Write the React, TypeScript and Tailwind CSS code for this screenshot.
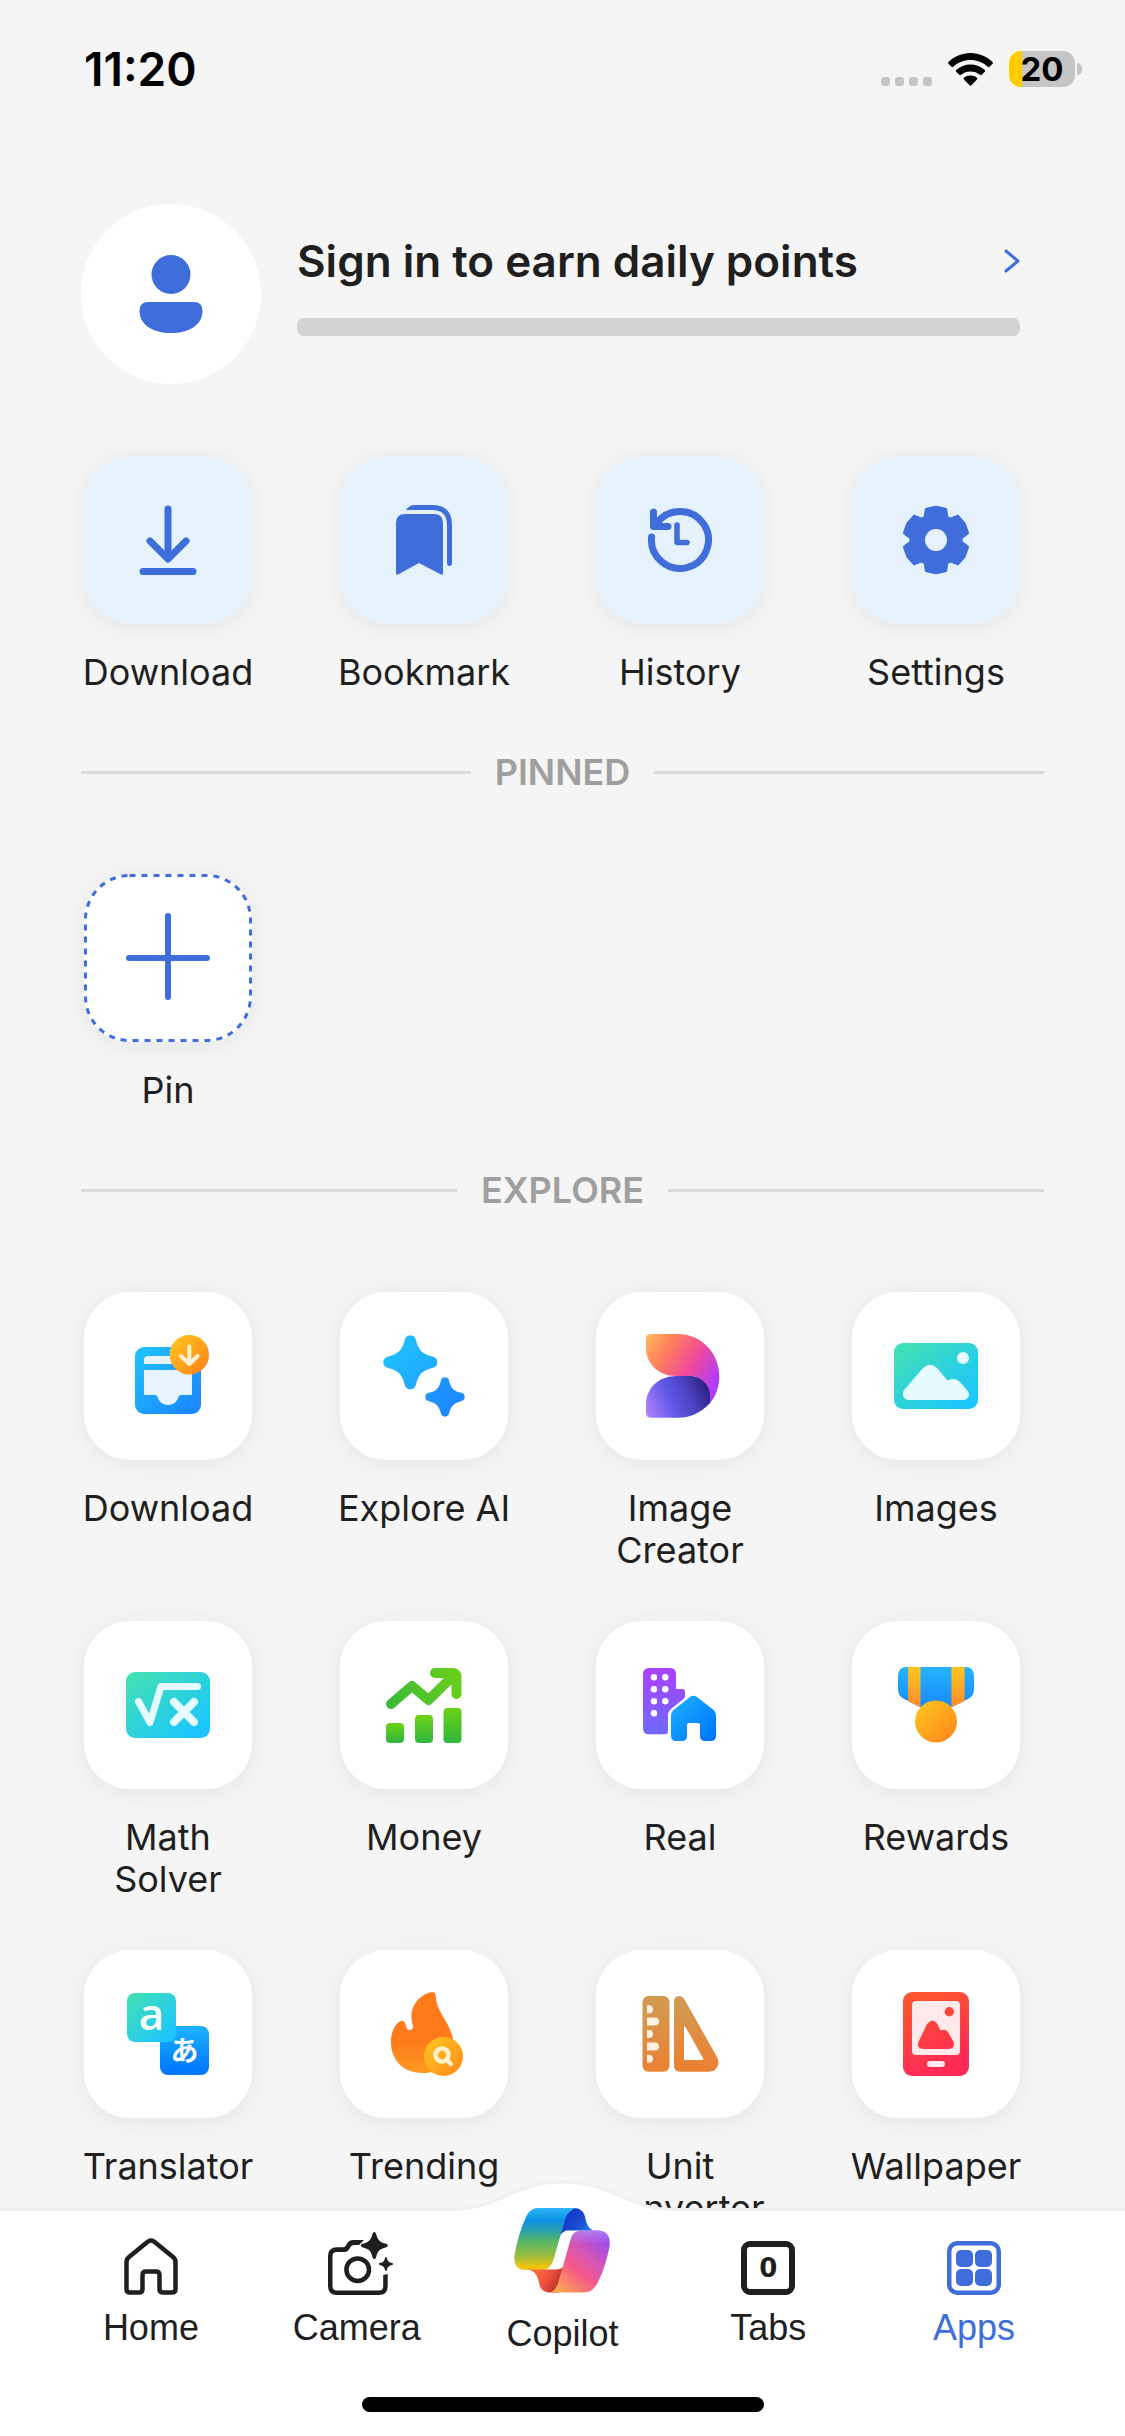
import type { ReactNode } from 'react'
import clsx from 'clsx'

type AppItem = {
  label: string
  icon: ReactNode
}

type GradientProps = {
  id: string
  from: string
  to: string
  vertical?: boolean
}

const Gradient = ({ id, from, to, vertical }: GradientProps) => (
  <linearGradient id={id} x1="0" y1="0" x2={vertical ? '0' : '1'} y2="1">
    <stop offset="0.1" stopColor={from} />
    <stop offset="0.9" stopColor={to} />
  </linearGradient>
)

// every tile icon is drawn on the same 168 unit square
const TileIcon = ({ children }: { children: ReactNode }) => (
  <svg viewBox="0 0 168 168" className="h-full w-full" fill="none" aria-hidden="true">
    {children}
  </svg>
)

const gearPoints = [0, 60, 120, 180, 240, 300]
  .flatMap((angle) =>
    [
      [25, -25],
      [32, -17],
      [32.5, 0],
      [32, 17],
      [25, 25],
    ].map(([r, offset]) => {
      const a = ((angle + offset - 90) * Math.PI) / 180
      return `${(84 + r * Math.cos(a)).toFixed(1)},${(84 + r * Math.sin(a)).toFixed(1)}`
    }),
  )
  .join(' ')

const softStar =
  'M-6-21Q-5-27 0-27Q5-27 6-21C8.500-12 12-8.500 21-6Q27-5 27 0Q27 5 21 6C12 8.500 8.500 12 6 21Q5 27 0 27Q-5 27-6 21C-8.500 12-12 8.500-21 6Q-27 5-27 0Q-27-5-21-6C-12-8.500-8.500-12-6-21Z'
const sharpStar =
  'M0-13.500Q1.300-13.500 1.700-12C3.500-5 5-3.500 12-1.700Q13.500-1.300 13.500 0Q13.500 1.300 12 1.700C5 3.500 3.500 5 1.700 12Q1.300 13.500 0 13.500Q-1.300 13.500-1.700 12C-3.500 5-5 3.500-12 1.700Q-13.500 1.300-13.500 0Q-13.500-1.300-12-1.700C-5-3.500-3.500-5-1.700-12Q-1.300-13.500 0-13.500Z'

const quickActions: AppItem[] = [
  {
    label: 'Download',
    icon: (
      <TileIcon>
        <path
          d="M84 53V102M66 85L84 103L102 85M59 115.500H109"
          stroke="#3f6edb"
          strokeWidth="7"
          strokeLinecap="round"
          strokeLinejoin="round"
        />
      </TileIcon>
    ),
  },
  {
    label: 'Bookmark',
    icon: (
      <TileIcon>
        <path
          d="M65 58H94Q103 58 103 67V117Q103 120 100 118L79 107L59 118Q56 120 56 117V67Q56 58 65 58Z"
          fill="#3f6edb"
        />
        <path
          d="M66 54Q69 49 75 49H92Q112 49 112 69V107Q112 110 109.500 110Q107 110 107 107V69Q107 54 92 54Z"
          fill="#3f6edb"
        />
      </TileIcon>
    ),
  },
  {
    label: 'History',
    icon: (
      <TileIcon>
        <path
          d="M55.600 81A28.500 28.500 0 1 0 61 67M57.500 56V70.500H72"
          stroke="#3f6edb"
          strokeWidth="7"
          strokeLinecap="round"
          strokeLinejoin="round"
        />
        <path
          d="M81 69V86.500H91"
          stroke="#3f6edb"
          strokeWidth="5.500"
          strokeLinecap="round"
          strokeLinejoin="round"
        />
      </TileIcon>
    ),
  },
  {
    label: 'Settings',
    icon: (
      <TileIcon>
        <polygon
          points={gearPoints}
          fill="#3f6edb"
          stroke="#3f6edb"
          strokeWidth="3.500"
          strokeLinejoin="round"
        />
        <circle cx="84" cy="84" r="11" fill="#e5f2fc" />
      </TileIcon>
    ),
  },
]

const exploreApps: AppItem[] = [
  {
    label: 'Download',
    icon: (
      <TileIcon>
        <defs>
          <Gradient id="dl-box" from="#20beff" to="#1b88ff" />
          <Gradient id="dl-badge" from="#ffc220" to="#ff8619" />
        </defs>
        <rect x="51" y="55" width="66" height="67" rx="9" fill="url(#dl-box)" />
        <path d="M64 64H108V72H60V68Q60 64 64 64Z" fill="#e6f4ff" />
        <path
          d="M61 78H107Q108 78 108 79V102Q108 103 107 103H97Q95 103 94.500 105C93 110 89 113 84 113S75 110 73.500 105Q73 103 71 103H61Q60 103 60 102V79Q60 78 61 78Z"
          fill="#e6f4ff"
        />
        <circle cx="105.300" cy="62.700" r="19.700" fill="url(#dl-badge)" />
        <path
          d="M105.300 54.500V72M97 64L105.300 72L113.600 64"
          stroke="#fff3d6"
          strokeWidth="4"
          strokeLinecap="round"
          strokeLinejoin="round"
        />
      </TileIcon>
    ),
  },
  {
    label: 'Explore AI',
    icon: (
      <TileIcon>
        <defs>
          <linearGradient id="spark-lg" gradientUnits="userSpaceOnUse" x1="-27" y1="-27" x2="27" y2="27">
            <stop stopColor="#1fc6ff" />
            <stop offset="1" stopColor="#1fa2ff" />
          </linearGradient>
          <linearGradient id="spark-sm" gradientUnits="userSpaceOnUse" x1="-27" y1="-27" x2="27" y2="27">
            <stop stopColor="#1e9cff" />
            <stop offset="1" stopColor="#1b82ff" />
          </linearGradient>
        </defs>
        <path d={softStar} transform="translate(70.300 70.300)" fill="url(#spark-lg)" />
        <path d={softStar} transform="translate(105 105) scale(.73)" fill="url(#spark-sm)" />
      </TileIcon>
    ),
  },
  {
    label: 'Image Creator',
    icon: (
      <TileIcon>
        <defs>
          <linearGradient id="ic-top" gradientUnits="userSpaceOnUse" x1="50" y1="50" x2="122" y2="94">
            <stop stopColor="#ffb15e" />
            <stop offset="0.25" stopColor="#ff7f5c" />
            <stop offset="0.6" stopColor="#f04a9a" />
            <stop offset="0.95" stopColor="#b03df5" />
          </linearGradient>
          <linearGradient id="ic-bottom" gradientUnits="userSpaceOnUse" x1="50" y1="122" x2="113" y2="94">
            <stop stopColor="#b184ff" />
            <stop offset="0.4" stopColor="#5f58e8" />
            <stop offset="0.7" stopColor="#4a41bd" />
            <stop offset="1" stopColor="#2a1d78" />
          </linearGradient>
        </defs>
        <path
          d="M50 47Q50 42 55 42H82C105 42 123.300 61 123.300 84C123.300 95 120 105 113 112V103C113 92 104 84 94 84H80C62 84 50 71 50 56Z"
          fill="url(#ic-top)"
        />
        <path
          d="M50 121V112C50 96 63 84 80 84H94C105 84 114 93 114 104V111C106 120 95 125.700 82 125.700H55Q50 125.700 50 121Z"
          fill="url(#ic-bottom)"
        />
      </TileIcon>
    ),
  },
  {
    label: 'Images',
    icon: (
      <TileIcon>
        <defs>
          <Gradient id="img-bg" from="#3fdfb8" to="#1cc5ff" />
        </defs>
        <rect x="42" y="51" width="84" height="66" rx="9" fill="url(#img-bg)" />
        <circle cx="111" cy="66" r="6" fill="#e6fbff" />
        <path
          d="M57 108C51 108 49 101 53 97L71 76Q78 69.500 85 76L95.700 88.500Q103 85 108 90L115 98C119 102 117 108 111 108Z"
          fill="#e6fbff"
        />
      </TileIcon>
    ),
  },
  {
    label: 'Math Solver',
    icon: (
      <TileIcon>
        <defs>
          <Gradient id="math-bg" from="#3fdfb8" to="#1cc5ff" />
        </defs>
        <rect x="42" y="51" width="84" height="66" rx="9" fill="url(#math-bg)" />
        <path
          d="M54.500 80.500L66 101.500L77 65.500H113.500"
          stroke="#e6fbff"
          strokeWidth="7"
          strokeLinecap="round"
          strokeLinejoin="round"
        />
        <path d="M90 81L110 101M110 81L90 101" stroke="#e6fbff" strokeWidth="8" strokeLinecap="round" />
      </TileIcon>
    ),
  },
  {
    label: 'Money',
    icon: (
      <TileIcon>
        <defs>
          <Gradient id="money-bar" from="#66cf1a" to="#36b83c" vertical />
          <linearGradient id="money-line" gradientUnits="userSpaceOnUse" x1="48" y1="84" x2="120" y2="50">
            <stop stopColor="#3cba3a" />
            <stop offset="1" stopColor="#6ad01a" />
          </linearGradient>
        </defs>
        <path
          d="M51 83L72 65L88.500 79L114 54M95 52H113Q116.500 52 116.500 56V73"
          stroke="url(#money-line)"
          strokeWidth="10"
          strokeLinecap="round"
          strokeLinejoin="round"
        />
        <rect x="46" y="102" width="18" height="20" rx="4" fill="url(#money-bar)" />
        <rect x="75" y="94" width="18" height="28" rx="4" fill="url(#money-bar)" />
        <rect x="103.500" y="87" width="18" height="35" rx="4" fill="url(#money-bar)" />
      </TileIcon>
    ),
  },
  {
    label: 'Real',
    icon: (
      <TileIcon>
        <defs>
          <Gradient id="tower" from="#a645ff" to="#7366ff" vertical />
          <Gradient id="house" from="#19aeff" to="#0078ff" />
        </defs>
        <path
          d="M53 47H74Q80 47 80 53V68H86Q89 68 89 71V75Q89 77 87 78.500L75 88Q72 90.500 72 94V110Q72 113.300 69 113.300H53Q47 113.300 47 107.300V53Q47 47 53 47Z"
          fill="url(#tower)"
        />
        {[56.3, 68.3, 80.3, 92.3].map((cy) => (
          <circle key={cy} cx="58" cy={cy} r="3.200" fill="#fff" />
        ))}
        {[56.3, 68.3, 80.3].map((cy) => (
          <circle key={cy} cx="69.300" cy={cy} r="3.200" fill="#fff" />
        ))}
        <path
          d="M75 95Q75 91 78 88.500L94 76Q97.500 73.500 101 76L117 88.500Q120 91 120 95V115Q120 120 115 120H109Q104 120 104 115V104Q104 102 102 102H93Q91 102 91 104V115Q91 120 86 120H80Q75 120 75 115Z"
          fill="url(#house)"
        />
      </TileIcon>
    ),
  },
  {
    label: 'Rewards',
    icon: (
      <TileIcon>
        <defs>
          <Gradient id="ribbon" from="#23b0ff" to="#1c8cff" vertical />
          <Gradient id="stripe" from="#ffc31f" to="#ff8e2a" vertical />
          <Gradient id="medal" from="#ffc31f" to="#ff8a1a" />
        </defs>
        <path
          d="M55 46H113Q122 46 122 55V68Q122 75 116 78L100 86H68L52 78Q46 75 46 68V55Q46 46 55 46Z"
          fill="url(#ribbon)"
        />
        <path d="M56 46H68.500V86.300L56 80ZM99.500 46H112.500V80L99.500 86.300Z" fill="url(#stripe)" />
        <circle cx="84" cy="100.500" r="21" fill="url(#medal)" />
      </TileIcon>
    ),
  },
  {
    label: 'Translator',
    icon: (
      <TileIcon>
        <defs>
          <Gradient id="tr-a" from="#3fdfb8" to="#1cc5ff" />
          <Gradient id="tr-b" from="#1aadff" to="#0079ff" vertical />
        </defs>
        <rect x="76" y="76" width="49" height="49" rx="8" fill="url(#tr-b)" />
        <rect x="43" y="43" width="49" height="49" rx="8" fill="url(#tr-a)" />
        <text
          x="67.500"
          y="80"
          textAnchor="middle"
          className="fill-white font-['Open_Sans',sans-serif] text-[44px] font-semibold"
        >
          a
        </text>
        <text
          x="100.500"
          y="110.500"
          textAnchor="middle"
          className="fill-white font-['Noto_Sans_CJK_JP',sans-serif] text-[28px] font-bold"
        >
          あ
        </text>
      </TileIcon>
    ),
  },
  {
    label: 'Trending',
    icon: (
      <TileIcon>
        <defs>
          <linearGradient id="flame" x1="0" y1="0" x2="0" y2="1">
            <stop offset="0.6" stopColor="#ff7a1a" />
            <stop offset="1" stopColor="#ff9a1f" />
          </linearGradient>
          <Gradient id="trend-badge" from="#ffc220" to="#ff9019" />
        </defs>
        <path
          d="M92 42Q95.500 42 95.700 46C96 64 114 74 114 98C114 114 100 123 83 123C64 123 51 111 51 92C51 83 54 75 60 71.300Q63 69.500 65 73C67 77 66 80 69.500 80Q73 80 73 76C67 57 80 44 92 42Z"
          fill="url(#flame)"
        />
        <circle cx="103.500" cy="106.500" r="19.500" fill="url(#trend-badge)" />
        <circle cx="102" cy="105" r="6.500" stroke="#fff1cf" strokeWidth="4.500" />
        <path d="M106.500 109.500L110.800 113.800" stroke="#fff1cf" strokeWidth="4.500" strokeLinecap="round" />
      </TileIcon>
    ),
  },
  {
    label: 'Unit Converter',
    icon: (
      <TileIcon>
        <defs>
          <Gradient id="ruler" from="#d39a4f" to="#ea8236" vertical />
        </defs>
        <rect x="46.500" y="46" width="27" height="75.700" rx="6" fill="url(#ruler)" />
        {[59.3, 84, 108.8].map((y) => (
          <path key={y} d={`M51 ${y - 4}H53a4 4 0 0 1 0 8H51Z`} fill="#fff0e2" />
        ))}
        {[71.6, 96.4].map((y) => (
          <path key={y} d={`M51 ${y - 4}H59a4 4 0 0 1 0 8H51Z`} fill="#fff0e2" />
        ))}
        <path
          fillRule="evenodd"
          d="M78 52Q78 46 83 46Q86.500 46 88.500 49.500L121 107C125 114 120 121.700 113 121.700H84Q78 121.700 78 116ZM88 77V110H106Q108 110 107 108L89.500 77Q88.500 75.500 88 77Z"
          fill="url(#ruler)"
        />
      </TileIcon>
    ),
  },
  {
    label: 'Wallpaper',
    icon: (
      <TileIcon>
        <defs>
          <linearGradient id="wall" gradientUnits="userSpaceOnUse" x1="58" y1="42" x2="92" y2="118">
            <stop stopColor="#ff592c" />
            <stop offset="1" stopColor="#ff2a55" />
          </linearGradient>
        </defs>
        <rect x="51" y="42" width="66" height="84" rx="9" fill="url(#wall)" />
        <rect x="60" y="51" width="48" height="54" rx="4" fill="#ffe9ea" />
        <circle cx="97.300" cy="61.700" r="4.700" fill="url(#wall)" />
        <path
          d="M71 99Q64 98 66.500 92L75 74Q80.500 67 85.500 74L88.500 80.500Q93.500 78.500 96 82L101.500 92Q103.500 98 97 99Z"
          fill="url(#wall)"
        />
        <rect x="75" y="111" width="18" height="6" rx="3" fill="#ffe9ea" />
      </TileIcon>
    ),
  },
]

const AppTile = ({ label, icon, className }: AppItem & { className?: string }) => (
  <button
    type="button"
    className="flex w-full cursor-pointer flex-col items-center gap-[27px] text-[36px] leading-[42px] text-[#1f1f1f]"
  >
    <span
      className={clsx(
        'block aspect-square w-full rounded-[46px] shadow-[0_3px_24px_rgba(0,0,0,0.07)]',
        className ?? 'bg-white',
      )}
    >
      {icon}
    </span>
    {/* labels may run a little wider than the tile before they wrap */}
    <span className="-mx-3 text-center">{label}</span>
  </button>
)

const TileGrid = ({ children }: { children: ReactNode }) => (
  <div className="grid grid-cols-4 gap-x-[88px] gap-y-[50px] pl-[3px] pr-6">{children}</div>
)

const SectionTitle = ({ children }: { children: string }) => (
  <div className="mt-[58px] mb-[81px] flex items-center gap-6">
    <span className="h-[3px] flex-1 bg-[#dadada]" />
    <h2 className="text-[36px] leading-[42px] font-semibold text-[#9f9f9f]">{children}</h2>
    <span className="h-[3px] flex-1 bg-[#dadada]" />
  </div>
)

const StatusBar = () => (
  <header className="flex h-[138px] shrink-0 items-center justify-between pr-[43px] pl-[84px] text-black">
    <time className="text-[46px] leading-[56px] font-semibold">11:20</time>
    <div className="flex items-center">
      <div className="mt-6 mr-4 flex gap-[5px]">
        {[0, 1, 2, 3].map((dot) => (
          <span key={dot} className="size-[9px] rounded-[3px] bg-[#c5c5c5]" />
        ))}
      </div>
      <svg viewBox="0 0 45 33" className="mr-4 h-[33px] w-[45px]" aria-label="Wi-Fi">
        <path d="M22.500 0C31 0 39 3.500 44.500 9Q45.300 10 44.500 10.800L41.500 13.800Q40.700 14.500 39.800 13.800C35 9.300 29 7 22.500 7S10 9.300 5.200 13.800Q4.300 14.500 3.500 13.800L.5 10.800Q-.3 10 .5 9C6 3.500 14 0 22.500 0Z" />
        <path d="M22.500 11.500C28 11.500 33 13.500 36.800 17Q37.700 18 36.800 18.800L33.700 21.800Q32.900 22.500 32 21.800C29.300 19.700 26 18.500 22.500 18.500S15.700 19.700 13 21.800Q12.100 22.500 11.300 21.800L8.200 18.800Q7.300 18 8.200 17C12 13.500 17 11.500 22.500 11.500Z" />
        <path d="M22.500 22.500C25 22.500 27.300 23.400 29 24.800Q29.900 25.700 29 26.600L23.400 32.300Q22.500 33 21.600 32.300L16 26.600Q15.100 25.700 16 24.800C17.700 23.400 20 22.500 22.500 22.500Z" />
      </svg>
      <div className="flex h-9 w-[66px] items-center justify-center rounded-[12px] bg-linear-to-r from-[#ffcc00] from-20% to-[#c5c5c5] to-20% text-[33px] leading-9 font-bold">
        20
      </div>
      <span className="ml-[2px] h-[12px] w-[5px] rounded-r-full bg-[#c5c5c5]" />
    </div>
  </header>
)

const SignInCard = () => (
  <section className="mt-[66px] mb-[72px] flex gap-9 pr-6">
    <div className="size-[180px] shrink-0 rounded-full bg-white">
      <svg viewBox="0 0 180 180" className="h-full w-full" fill="#3f6edb" aria-hidden="true">
        <circle cx="90" cy="70.500" r="19.500" />
        <path d="M67 98H113Q121.500 98 121.500 107C121.500 121 108 129 90 129S58.500 121 58.500 107Q58.500 98 67 98Z" />
      </svg>
    </div>
    <div className="flex flex-1 flex-col gap-[29px] pt-[29px]">
      <a href="#sign-in" className="flex items-center justify-between text-[#1f1f1f]">
        <span className="text-[44px] leading-[56px] font-semibold">Sign in to earn daily points</span>
        <svg viewBox="0 0 16 24" className="h-6 w-4" fill="none" aria-hidden="true">
          <path d="M2 2L14 12L2 22" stroke="#3f6edb" strokeWidth="3" strokeLinecap="round" strokeLinejoin="round" />
        </svg>
      </a>
      <div className="h-[18px] rounded-[7px] bg-[#d3d3d3]" />
    </div>
  </section>
)

const HomeIcon = () => (
  <svg viewBox="0 0 54 57" className="h-[57px] w-[54px]" fill="none" aria-hidden="true">
    <path
      d="M2.500 24Q2.500 21 5 19L24 3.500Q27 1.500 30 3.500L49 19Q51.500 21 51.500 24V51Q51.500 54.500 48 54.500H39Q35.500 54.500 35.500 51V37Q35.500 33.500 32 33.500H22Q18.500 33.500 18.500 37V51Q18.500 54.500 15 54.500H6Q2.500 54.500 2.500 51Z"
      stroke="currentColor"
      strokeWidth="4.500"
      strokeLinejoin="round"
    />
  </svg>
)

const CameraIcon = () => (
  <svg viewBox="-8 0 73 63" className="h-[63px] w-[73px]" fill="none" aria-hidden="true">
    <path
      d="M36 8L31 13H26Q23.500 13 22.500 15L21 17.500Q19.500 20 16.500 20H9Q4.500 20 4.500 24V54Q4.500 58.500 9 58.500H51Q55.200 58.500 55.200 54V43L59.700 42V54Q59.700 63 51 63H9Q0 63 0 54V24Q0 15.300 9 15.300H15Q17 15.300 18 13.500L19 11.500Q21 8 25 8Z"
      fill="currentColor"
    />
    <circle cx="29.700" cy="37.700" r="11.300" stroke="currentColor" strokeWidth="4.500" />
    <path d={sharpStar} transform="translate(46.300 13.500)" fill="currentColor" />
    <path d={sharpStar} transform="translate(58 32) scale(.52)" fill="currentColor" />
  </svg>
)

const CopilotIcon = () => (
  <svg viewBox="0 0 96 85" className="h-[85px] w-[96px]" aria-hidden="true">
    <defs>
      <linearGradient id="cp-left" x1="0" y1="0" x2="0" y2="1">
        <stop stopColor="#2db6f7" />
        <stop offset="0.2" stopColor="#0d92e2" />
        <stop offset="0.36" stopColor="#2a9fb0" />
        <stop offset="0.52" stopColor="#52b56c" />
        <stop offset="0.78" stopColor="#9cbc3c" />
        <stop offset="0.95" stopColor="#f2c511" />
      </linearGradient>
      <linearGradient id="cp-fold" x1="0" y1="0.3" x2="1" y2="1">
        <stop stopColor="#0b35c4" />
        <stop offset="0.5" stopColor="#1c4cd2" />
        <stop offset="1" stopColor="#1590f0" />
      </linearGradient>
      <linearGradient id="cp-right" gradientUnits="userSpaceOnUse" x1="44" y1="85" x2="92" y2="28">
        <stop stopColor="#ffae4a" />
        <stop offset="0.4" stopColor="#f4588a" />
        <stop offset="0.65" stopColor="#d355b8" />
        <stop offset="1" stopColor="#964af8" />
      </linearGradient>
      <linearGradient id="cp-shine" gradientUnits="userSpaceOnUse" x1="0" y1="22" x2="0" y2="36">
        <stop stopColor="#b98cf0" stopOpacity="0.8" />
        <stop offset="1" stopColor="#b98cf0" stopOpacity="0" />
      </linearGradient>
      <linearGradient id="cp-tail" x1="0.2" y1="0.3" x2="1" y2="0.6">
        <stop stopColor="#fb6a3e" />
        <stop offset="0.4" stopColor="#f0503c" />
        <stop offset="1" stopColor="#a8282c" />
      </linearGradient>
    </defs>
    <path d="M60 0C67 0 70.500 4 71.500 11C73 17 75 21 80 22.500H54Q49 22.500 46 28L50 8Z" fill="url(#cp-fold)" />
    <path
      d="M24 0H62C55 1 52 8 50 15L40 50C38 57 35 62 28 62H11C2 62-1 54 .7 46C3 33 7 20 12 9Q16 0 24 0Z"
      fill="url(#cp-left)"
    />
    <path d="M14 61.500H40Q47 62 50 58L52 66L45 84.500H36C30 84.500 26 81 25 75C24 68 21 63 14 61.500Z" fill="url(#cp-tail)" />
    <path
      d="M67 22.500H84C93 22.500 97 29 95.500 39C93 52 89 64 84 74Q79 84.500 70 84.500H36C40 84 43 79 45 72L57 30Q59 23 67 22.500Z"
      fill="url(#cp-right)"
    />
    <path d="M67 22.500H84C93 22.500 97 29 95.500 36H55L57 30Q59 23 67 22.500Z" fill="url(#cp-shine)" />
  </svg>
)

const TabsIcon = () => (
  <span className="flex size-[54px] items-center justify-center rounded-[9px] border-[6px] border-[#1f1f1f] font-['DejaVu_Sans',sans-serif] text-[26px] leading-none font-bold">
    0
  </span>
)

const AppsIcon = () => (
  <svg viewBox="0 0 54 54" className="size-[54px]" fill="currentColor" aria-hidden="true">
    <rect x="2.250" y="2.250" width="49.500" height="49.500" rx="8" fill="none" stroke="currentColor" strokeWidth="4.500" />
    <rect x="9" y="9" width="17" height="17" rx="5" />
    <rect x="28" y="9" width="17" height="17" rx="5" />
    <rect x="9" y="28" width="17" height="17" rx="5" />
    <rect x="28" y="28" width="17" height="17" rx="5" />
  </svg>
)

const navItems = [
  { label: 'Home', icon: <HomeIcon /> },
  { label: 'Camera', icon: <CameraIcon /> },
  { label: 'Copilot', icon: <CopilotIcon />, raised: true },
  { label: 'Tabs', icon: <TabsIcon /> },
  { label: 'Apps', icon: <AppsIcon />, active: true },
]

const BottomNav = () => (
  <nav className="relative shrink-0 border-t-[3px] border-[#f0f0f0] bg-white">
    {/* hump behind the Copilot button */}
    <svg
      viewBox="0 0 220 36"
      className="absolute -top-[33px] left-1/2 h-[36px] w-[220px] -translate-x-1/2"
      aria-hidden="true"
    >
      <path d="M0 31.500C45 31.500 60 4 110 4S175 31.500 220 31.500V36H0Z" fill="#fff" />
      <path d="M0 31.500C45 31.500 60 4 110 4S175 31.500 220 31.500" fill="none" stroke="#f0f0f0" strokeWidth="3" />
    </svg>
    <div className="relative grid grid-cols-5 px-12">
      {navItems.map(({ label, icon, raised, active }) => (
        <a
          key={label}
          href={`#${label.toLowerCase()}`}
          className={clsx(
            "flex flex-col items-center font-['Liberation_Sans',Arial,sans-serif] text-[36px] leading-[42px]",
            active ? 'text-[#3f6edb]' : 'text-[#1f1f1f]',
            raised ? '-mt-[3px] gap-5' : 'gap-3',
          )}
        >
          <span className={clsx('flex items-end', !raised && 'h-[84px]')}>{icon}</span>
          {label}
        </a>
      ))}
    </div>
    <div className="mx-auto mt-[42px] mb-6 h-[15px] w-[402px] rounded-full bg-black" />
  </nav>
)

export default function App() {
  return (
    <div className="flex h-screen flex-col overflow-hidden bg-[#f5f5f5] font-[Inter,sans-serif]">
      <StatusBar />
      <main className="min-h-0 flex-1 overflow-y-auto px-[81px] [scrollbar-width:none]">
        <SignInCard />

        <TileGrid>
          {quickActions.map((item) => (
            <AppTile key={item.label} {...item} className="bg-[#e5f2fc]" />
          ))}
        </TileGrid>

        <SectionTitle>PINNED</SectionTitle>
        <TileGrid>
          <AppTile
            label="Pin"
            icon={
              <TileIcon>
                <rect
                  x="1.500"
                  y="1.500"
                  width="165"
                  height="165"
                  rx="44"
                  stroke="#3f6edb"
                  strokeWidth="3"
                  strokeDasharray="6 6"
                />
                <path d="M45 84H123M84 42V123" stroke="#3f6edb" strokeWidth="6" strokeLinecap="round" />
              </TileIcon>
            }
          />
        </TileGrid>

        <SectionTitle>EXPLORE</SectionTitle>
        <TileGrid>
          {exploreApps.map((item) => (
            <AppTile key={item.label} {...item} />
          ))}
        </TileGrid>
      </main>
      <BottomNav />
    </div>
  )
}
